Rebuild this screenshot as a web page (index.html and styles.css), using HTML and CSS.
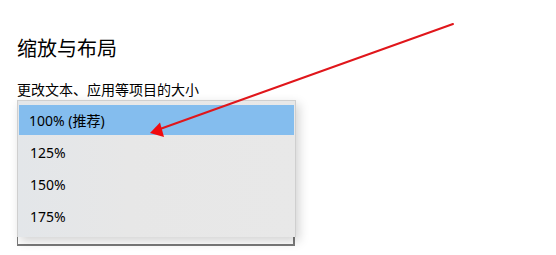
FILE: index.html
```html
<!DOCTYPE html>
<html lang="zh-CN">
<head>
<meta charset="utf-8">
<title>缩放与布局</title>
<link rel="stylesheet" href="styles.css">
</head>
<body>
<main class="page">
  <h1 class="title">缩放与布局</h1>
  <p class="label">更改文本、应用等项目的大小</p>
  <div class="combo-wrap">
    <div class="combo"></div>
    <ul class="menu">
      <li class="item selected">100% (推荐)</li>
      <li class="item">125%</li>
      <li class="item">150%</li>
      <li class="item">175%</li>
    </ul>
  </div>
  <svg class="arrow" width="556" height="255" viewBox="0 0 556 255">
    <line x1="453" y1="24" x2="160" y2="129" stroke="#e0161b" stroke-width="2" stroke-linecap="round"/>
    <polygon points="150,133 160,122.5 164,137" fill="#f00a0f"/>
  </svg>
</main>
</body>
</html>
```
FILE: styles.css
```css
html, body {
  margin: 0;
  padding: 0;
  background: #ffffff;
}
.page {
  position: relative;
  width: 556px;
  height: 255px;
  padding: 34px 0 0 17px;
  box-sizing: border-box;
  font-family: "Noto Sans", "Noto Sans CJK SC", sans-serif;
  color: #000;
  overflow: hidden;
}
.title {
  margin: 0;
  font-family: "Noto Sans CJK SC", sans-serif;
  font-size: 20px;
  line-height: 28px;
  font-weight: 400;
}
.label {
  margin: 17px 0 0 0;
  font-family: "Noto Sans CJK SC", sans-serif;
  font-size: 14px;
  line-height: 20px;
}
.combo-wrap {
  position: relative;
  margin-top: 1px;
  width: 279px;
  height: 146px;
}
.combo {
  width: 278px;
  height: 146px;
  box-sizing: border-box;
  border: 2px solid #7a7a7a;
  border-top: none;
  border-left-width: 1px;
}
.menu {
  position: absolute;
  top: 0;
  left: 0;
  width: 279px;
  height: 137px;
  box-sizing: border-box;
  margin: 0;
  padding: 3px 0 5px 0;
  list-style: none;
  border: 1px solid #cfcfcf;
  border-bottom: none;
  background: linear-gradient(90deg, #e3e6e9 0%, #e7e7e7 40%, #e8e8e8 100%);
  box-shadow: 3px 4px 10px rgba(0, 0, 0, 0.18);
}
.item {
  height: 32px;
  display: flex;
  align-items: center;
  padding-left: 12px;
  font-size: 14px;
  box-sizing: border-box;
}
.item.selected {
  margin: 1px 1px;
  height: 30px;
  padding-left: 10px;
  background: #84bdee;
}
.arrow {
  position: absolute;
  top: 0;
  left: 0;
  pointer-events: none;
}
```
